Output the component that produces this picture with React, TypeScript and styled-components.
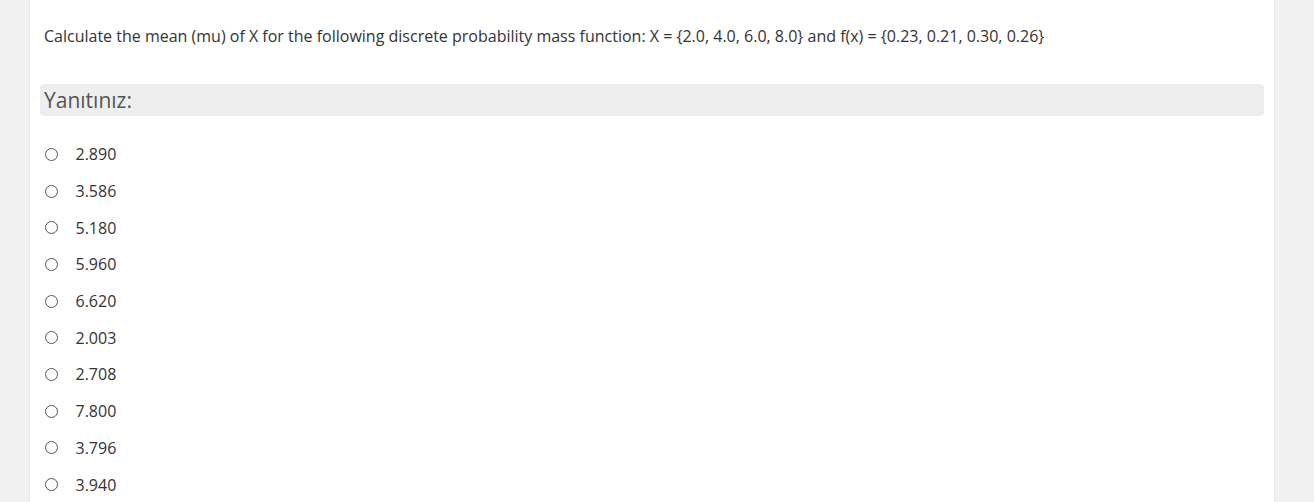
import React from "react";
import styled, { createGlobalStyle } from "styled-components";

const Global = createGlobalStyle`
  html, body { margin: 0; padding: 0; background: #f1f1f1; }
  body { font-family: "Open Sans", "Liberation Sans", sans-serif; }
`;

const Page = styled.div`
  display: flex;
  padding-left: 29px;
  min-height: 502px;
  box-sizing: border-box;
`;

const Card = styled.div`
  width: 1246px;
  background: #ffffff;
  border-left: 1px solid #e9e9e9;
  border-right: 1px solid #e9e9e9;
  box-sizing: border-box;
  padding: 25px 10px 0 10px;
`;

const Question = styled.p`
  margin: 0 0 0 4px;
  font-size: 16px;
  line-height: 22px;
  color: #333333;
`;

const AnswerHeader = styled.div`
  margin-top: 37px;
  height: 32px;
  background: #eeeeee;
  border-radius: 4px;
  padding-left: 4px;
  font-size: 21px;
  line-height: 32px;
  color: #555555;
`;

const Options = styled.div`
  display: flex;
  flex-direction: column;
  padding: 20px 0 0 4px;
`;

const Option = styled.label`
  display: flex;
  align-items: center;
  height: 36.7px;
  font-size: 16px;
  color: #333333;
`;

const Radio = styled.span`
  width: 11px;
  height: 11px;
  border: 1.3px solid #555555;
  border-radius: 50%;
  margin-right: 18px;
  margin-left: 0.5px;
  flex-shrink: 0;
`;

const values = ["2.890", "3.586", "5.180", "5.960", "6.620", "2.003", "2.708", "7.800", "3.796", "3.940"];

export default function App() {
  return (
    <>
      <Global />
      <Page>
        <Card>
          <Question>
            Calculate the mean (mu) of X for the following discrete probability mass function: X = {"{"}2.0, 4.0, 6.0, 8.0{"}"} and f(x) = {"{"}0.23, 0.21, 0.30, 0.26{"}"}
          </Question>
          <AnswerHeader>Yanıtınız:</AnswerHeader>
          <Options>
            {values.map((v) => (
              <Option key={v}>
                <Radio />
                {v}
              </Option>
            ))}
          </Options>
        </Card>
      </Page>
    </>
  );
}
